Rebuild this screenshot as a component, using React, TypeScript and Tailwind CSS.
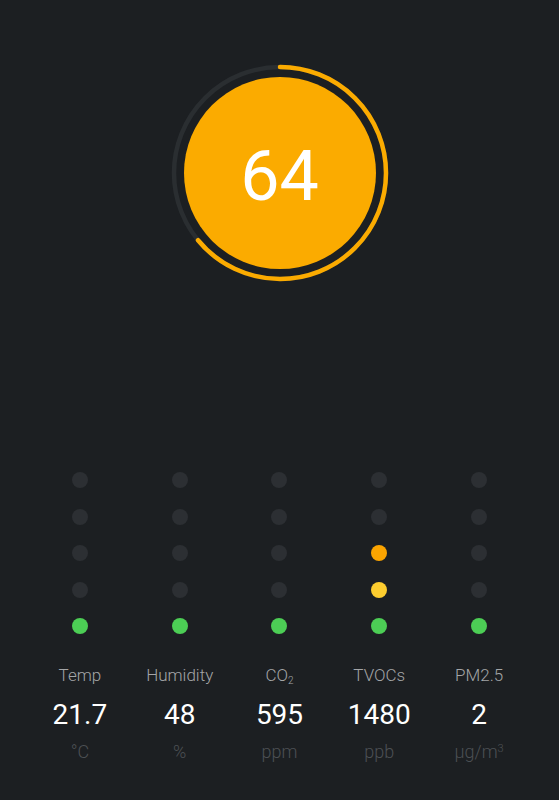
import React from 'react';

type Metric = {
  label: React.ReactNode;
  value: string;
  unit: React.ReactNode;
  level: string[]; // top -> bottom dot colours
};

const OFF = 'bg-[#2c2f33]';
const GREEN = 'bg-[#4cce55]';
const YELLOW = 'bg-[#fdcd2f]';
const ORANGE = 'bg-[#fba400]';

const metrics: Metric[] = [
  { label: 'Temp', value: '21.7', unit: '°C', level: [OFF, OFF, OFF, OFF, GREEN] },
  { label: 'Humidity', value: '48', unit: '%', level: [OFF, OFF, OFF, OFF, GREEN] },
  {
    label: (
      <>
        CO<sub className="text-[10px] align-baseline relative top-[3px]">2</sub>
      </>
    ),
    value: '595',
    unit: 'ppm',
    level: [OFF, OFF, OFF, OFF, GREEN],
  },
  { label: 'TVOCs', value: '1480', unit: 'ppb', level: [OFF, OFF, ORANGE, YELLOW, GREEN] },
  {
    label: 'PM2.5',
    value: '2',
    unit: (
      <>
        µg/m<sup className="text-[11px] relative -top-[6px] align-baseline">3</sup>
      </>
    ),
    level: [OFF, OFF, OFF, OFF, GREEN],
  },
];

const Gauge = ({ score }: { score: number }) => {
  const r = 106;
  const c = 2 * Math.PI * r;
  const len = (score / 100) * c;
  return (
    <div className="relative w-[222px] h-[222px]">
      <svg width="222" height="222" viewBox="0 0 222 222" className="absolute inset-0">
        <circle cx="111" cy="111" r={r} fill="none" stroke="#2a2e31" strokeWidth="4.5" />
        <circle
          cx="111"
          cy="111"
          r={r}
          fill="none"
          stroke="#fbab00"
          strokeWidth="4.5"
          strokeLinecap="round"
          strokeDasharray={`${len} ${c}`}
          transform="rotate(-90 111 111)"
        />
      </svg>
      <div className="absolute inset-[15px] rounded-full bg-[#fbab00] flex items-center justify-center">
        <span className="text-white text-[70px] leading-none font-normal pt-[6px]">{score}</span>
      </div>
    </div>
  );
};

export default function App() {
  return (
    <div
      className="w-full min-h-[800px] bg-[#1c1f22] flex flex-col items-center"
      style={{ fontFamily: 'Roboto, "Liberation Sans", sans-serif' }}
    >
      <div className="mt-[62px]">
        <Gauge score={64} />
      </div>

      <div className="w-full px-[30px] mt-[188px] grid grid-cols-5">
        {metrics.map((m, i) => (
          <div key={i} className="flex flex-col items-center">
            <div className="flex flex-col items-center gap-[20.5px]">
              {m.level.map((cls, j) => (
                <span key={j} className={`block w-4 h-4 rounded-full ${cls}`} />
              ))}
            </div>
            <div className="mt-[31px] text-[17px] leading-5 font-light text-[#a3a5a7]">{m.label}</div>
            <div className="mt-[14px] text-[28px] leading-8 text-white">{m.value}</div>
            <div className="mt-[11px] text-[18px] leading-5 font-light text-[#4c5054]">{m.unit}</div>
          </div>
        ))}
      </div>
    </div>
  );
}
